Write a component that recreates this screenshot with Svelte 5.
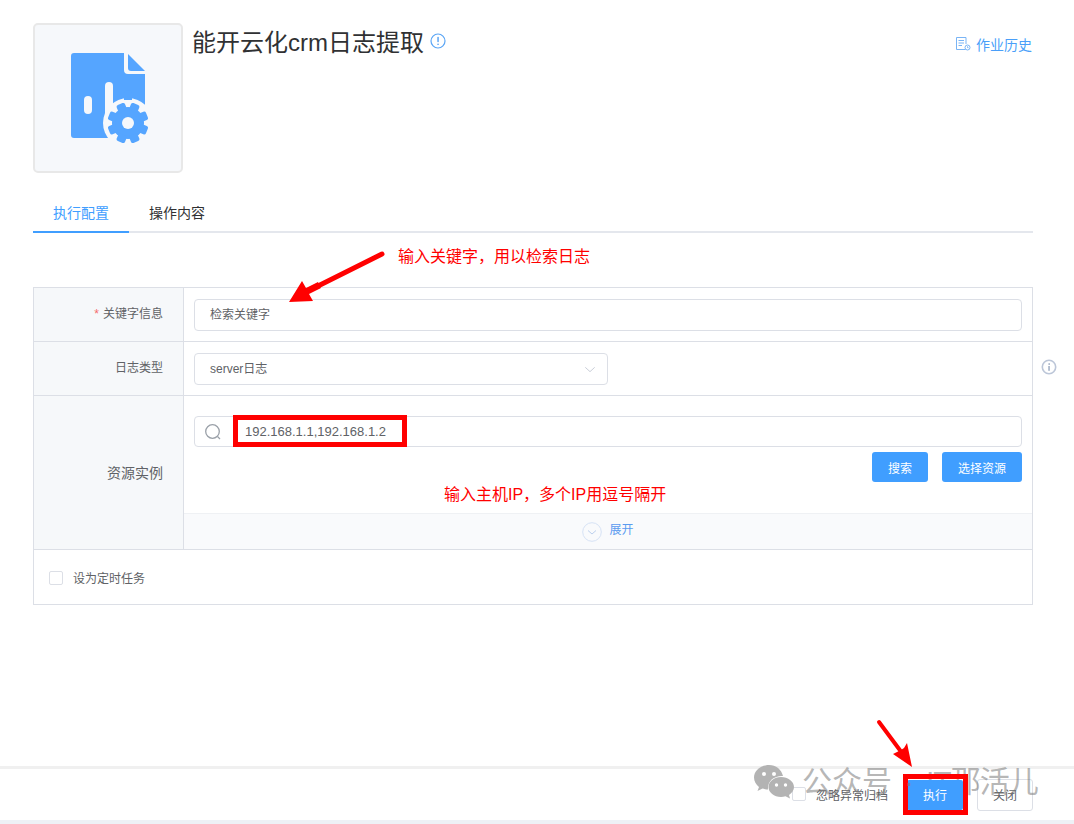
<script>
  const rows = { keyword: '检索关键字', logType: 'server日志' };
  const teeth = [0, 45, 90, 135, 180, 225, 270, 315];
</script>

<div class="page">
  <header class="head">
    <div class="logo">
      <svg width="78" height="90" viewBox="0 0 78 90">
        <path d="M3 0H53V17Q53 21 57 21H74V85H3Q0 85 0 82V3Q0 0 3 0Z" fill="#55a5ff"/>
        <path d="M57 1L74 18H60Q57 18 57 15Z" fill="#55a5ff"/>
        <rect x="13" y="43" width="8" height="18" rx="4" fill="#f6f8fb"/>
        <rect x="34" y="29" width="8" height="40" rx="4" fill="#f6f8fb"/>
        <circle cx="57" cy="70" r="25" fill="#f6f8fb"/>
        <path d="M53 47V41a4 4 0 0 1 8 0V47Z" fill="#55a5ff"/>
        <circle cx="57" cy="70" r="16" fill="#55a5ff"/>
        {#each teeth as a}
          <rect x="52.500" y="49.500" width="9" height="8" rx="2" fill="#55a5ff" transform="rotate({a + 22.5} 57 70)"/>
        {/each}
        <circle cx="57" cy="70" r="6" fill="#f6f8fb"/>
      </svg>
    </div>
    <div class="title-wrap">
      <h1>能开云化crm日志提取</h1>
      <svg class="title-info" width="16" height="16" viewBox="0 0 16 16"><circle cx="8" cy="8" r="7" fill="none" stroke="#5aa5f5" stroke-width="1.200"/><rect x="7.300" y="3.700" width="1.500" height="5.500" rx=".7" fill="#5aa5f5"/><rect x="7.300" y="10.400" width="1.500" height="1.700" rx=".7" fill="#5aa5f5"/></svg>
    </div>
    <a class="history">
      <svg width="16" height="15" viewBox="0 0 16 15" fill="none" stroke="#79b4f5" stroke-width="1"><path d="M10.500 13.500H1.500V1.500H11V8"/><path d="M3.500 4.500H9M3.500 7H9M3.500 9.500H7"/><circle cx="12.500" cy="11.500" r="2.500"/><path d="M12.500 10.300V11.700H13.500"/></svg>
      作业历史
    </a>
  </header>

  <nav class="tabs">
    <div class="tab active">执行配置</div>
    <div class="tab">操作内容</div>
  </nav>

  <div class="table-wrap">
    <section class="form">
      <div class="row row-key">
        <div class="label"><span class="req">*</span>关键字信息</div>
        <div class="cell"><div class="input wide">{rows.keyword}</div></div>
      </div>
      <div class="row row-type">
        <div class="label">日志类型</div>
        <div class="cell">
          <div class="input select">
            <span>{rows.logType}</span>
            <svg width="12" height="7" viewBox="0 0 14 8" fill="none" stroke="#c6cbd6" stroke-width="1.100"><path d="M1.500 1.500L7 6.500L12.500 1.500"/></svg>
          </div>
        </div>
        <svg class="side-info" width="16" height="16" viewBox="0 0 16 16"><circle cx="8" cy="8" r="6.700" fill="none" stroke="#bcc6d8" stroke-width="1.600"/><rect x="7.200" y="7" width="1.700" height="4.800" fill="#aab6ca"/><rect x="7.400" y="4.200" width="1.600" height="1.700" fill="#aab6ca"/></svg>
      </div>
      <div class="row row-res">
        <div class="label label-big">资源实例</div>
        <div class="res">
          <div class="res-main">
            <div class="search">
              <svg width="18" height="18" viewBox="0 0 18 18" fill="none" stroke="#9aa0a8" stroke-width="1.300"><circle cx="8.500" cy="8.500" r="6.800"/><path d="M13.500 13.500L16 16"/></svg>
              <span class="search-val">192.168.1.1,192.168.1.2</span>
            </div>
            <div class="btns">
              <button class="btn small">搜索</button>
              <button class="btn large">选择资源</button>
            </div>
          </div>
          <div class="expand">
            <svg width="20" height="20" viewBox="0 0 20 20" fill="none"><circle cx="10" cy="10" r="9.300" stroke="#d6e2f5"/><path d="M6 8.500L10 12L14 8.500" stroke="#bcd0ee"/></svg>
            <span>展开</span>
          </div>
        </div>
      </div>
      <div class="row row-check">
        <span class="check"></span>
        <span class="check-text">设为定时任务</span>
      </div>
    </section>
  </div>

  <footer class="foot">
    <span class="check foot-check"></span>
    <span class="foot-text">忽略异常归档</span>
    <button class="btn run">执行</button>
    <button class="close">关闭</button>
  </footer>

  <!-- annotations drawn over the screenshot -->
  <div class="note note-key">输入关键字，用以检索日志</div>
  <div class="note note-ip">输入主机IP，多个IP用逗号隔开</div>
  <div class="red-box box-ip"></div>
  <div class="mark">
    <svg width="40" height="34" viewBox="0 0 40 34">
      <path d="M15 0C7 0 0 5.500 0 12.500C0 16.500 2 19.500 5 22L3.500 26L8.500 23.500C10 24 12 24.500 14 24.500C13.300 16 20 10.500 29 11C27.500 4.500 22 0 15 0Z" fill="#b3b3b3"/>
      <path d="M27 12C20 12 14.500 16.500 14.500 22C14.500 27.500 20 32 27 32C28.500 32 30 31.700 31.500 31.200L36 33.500L35 30C38 28 40 25.200 40 22C40 16.500 34 12 27 12Z" fill="#b3b3b3"/>
      <circle cx="10" cy="9" r="2" fill="#fff"/><circle cx="20" cy="9" r="2" fill="#fff"/><circle cx="22.500" cy="20" r="1.700" fill="#fff"/><circle cx="31.500" cy="20" r="1.700" fill="#fff"/>
    </svg>
    <span class="mark-name">公众号</span>
    <span class="mark-dot">·</span>
    <span class="mark-tail">IT那活儿</span>
  </div>
  <div class="red-box box-run"></div>
  <svg class="arrows" width="1074" height="824" viewBox="0 0 1074 824">
    <path d="M382 254L316 287" stroke="#f00" stroke-width="5" stroke-linecap="round"/>
    <path d="M289 302L302 281L306 288L318 282L321 288L309 294L313 301Z" fill="#f00"/>
    <path d="M879 722L905 757" stroke="#f00" stroke-width="4" stroke-linecap="round"/>
    <path d="M912 767L893 754L901 750L904 748L907 743Z" fill="#f00"/>
  </svg>
</div>

<style>
  :global(body) {
    margin: 0;
    background: #fff;
    font-family: "Liberation Sans", "Noto Sans CJK SC", sans-serif;
    color: #5a5e66;
  }
  .page { position: relative; width: 1074px; height: 824px; overflow: hidden; }

  .head { display: flex; padding: 23px 42px 0 33px; height: 150px; }
  .logo {
    box-sizing: border-box; width: 150px; height: 150px;
    background: #f6f8fb; border: 2px solid #e8e8e8; border-radius: 5px;
    display: flex; justify-content: center; align-items: center;
    padding: 0 0 0 4px;
  }
  .title-wrap { display: flex; align-items: flex-start; margin-left: 9px; flex: 1; gap: 6px; }
  h1 { margin: 1px 0 0; font-size: 24px; font-weight: 400; line-height: 37px; color: #303133; }
  .title-info { margin-top: 10px; }
  .history { display: flex; align-items: center; gap: 5px; height: 17px; margin-top: 12px; font-size: 14px; color: #4a9ff9; }

  .tabs { display: flex; margin: 22px 41px 0 33px; height: 36px; border-bottom: 2px solid #e4e7ed; }
  .tab { box-sizing: border-box; width: 96px; height: 38px; padding-top: 9px; text-align: center; font-size: 14px; line-height: 18px; color: #303133; }
  .tab.active { color: #409eff; border-bottom: 2px solid #409eff; }

  .table-wrap { margin: 54px 41px 0 33px; }
  .form { box-sizing: border-box; width: 1000px; height: 318px; border: 1px solid #dcdfe6; }
  .row { display: flex; position: relative; box-sizing: border-box; border-bottom: 1px solid #dcdfe6; }
  .row-key, .row-type { height: 54px; }
  .row-res { height: 154px; }
  .row-check { height: 55px; border-bottom: 0; align-items: center; padding-left: 15px; }
  .label {
    box-sizing: border-box; width: 150px; background: #f6f8fa;
    border-right: 1px solid #dcdfe6; text-align: right; padding: 17px 20px 0 0;
    font-size: 12px; line-height: 18px; color: #606266; flex: none;
  }
  .label-big { font-size: 14px; padding-top: 68px; }
  .req { color: #f56c6c; margin-right: 4px; }
  .cell { flex: 1; padding: 11px 10px 0 10px; }
  .input {
    box-sizing: border-box; height: 32px; border: 1px solid #dcdfe6; border-radius: 4px;
    padding: 0 15px; font-size: 12px; line-height: 30px; color: #606266;
  }
  .wide { width: 828px; }
  .select { width: 414px; display: flex; justify-content: space-between; align-items: center; padding-right: 11px; }
  .side-info { position: absolute; left: 1007px; top: 17px; }

  .res { flex: 1; display: flex; flex-direction: column; }
  .res-main { flex: 1; padding: 20px 10px 0 10px; }
  .search {
    box-sizing: border-box; width: 828px; height: 31px; border: 1px solid #dcdfe6; border-radius: 4px;
    display: flex; align-items: center; padding-left: 9px; gap: 24px; font-size: 13px; color: #606266;
  }
  .search-val { margin-left: -1px; }
  .btns { display: flex; justify-content: flex-end; gap: 14px; margin-top: 5px; width: 828px; }
  .btn { border: 0; color: #fff; border-radius: 3px; font-family: inherit; font-size: 12px; height: 30px; padding: 0; background: #409eff; }
  .small { width: 56px; }
  .large { width: 80px; }
  .expand {
    height: 36px; box-sizing: border-box; background: #f9fafc; border-top: 1px solid #eff1f4;
    display: flex; justify-content: center; align-items: center; gap: 7px; font-size: 12px; color: #5a9bf0;
  }
  .expand span { margin-top: -6px; }
  .check { box-sizing: border-box; width: 14px; height: 14px; border: 1px solid #dcdfe6; border-radius: 2px; background: #fff; flex: none; }
  .check-text { margin-left: 10px; font-size: 12px; color: #606266; }

  .foot {
    position: absolute; left: 0; top: 766px; width: 1074px; height: 58px; box-sizing: border-box;
    border-top: 3px solid #f0f0f0; border-bottom: 4px solid #eef1f6;
    display: flex; align-items: center; justify-content: flex-end; padding: 0 41px 0 0; background: #fff;
  }
  .foot-check { margin-right: 10px; margin-top: -1px; }
  .foot-text { font-size: 12px; color: #606266; margin-right: 19px; margin-top: -1px; }
  .run { position: relative; z-index: 2; width: 56px; height: 30px; border-radius: 2px; }
  .close { width: 56px; height: 32px; box-sizing: border-box; margin-left: 14px; background: #fff; border: 1px solid #dcdfe6; border-radius: 3px; font-family: inherit; font-size: 12px; color: #606266; padding: 0; }

  .note { position: absolute; color: #f00; font-size: 16px; line-height: 20px; white-space: nowrap; }
  .note-key { left: 398px; top: 247px; }
  .note-ip { left: 444px; top: 485px; }
  .red-box { position: absolute; box-sizing: border-box; border: 5px solid #f00; }
  .box-ip { left: 233px; top: 415px; width: 174px; height: 32px; }
  .box-run { left: 903px; top: 774px; width: 65px; height: 41px; z-index: 2; }
  .arrows { position: absolute; left: 0; top: 0; pointer-events: none; z-index: 3; }
  .mark {
    position: absolute; left: 754px; top: 764px; display: flex; align-items: center;
    font-size: 30px; line-height: 36px; color: rgba(120, 120, 120, .55); white-space: nowrap;
  }
  .mark-name { margin-left: 8px; }
  .mark-dot { position: relative; z-index: 4; width: 34px; text-align: center; }
  .mark-tail { letter-spacing: -1px; }
</style>
